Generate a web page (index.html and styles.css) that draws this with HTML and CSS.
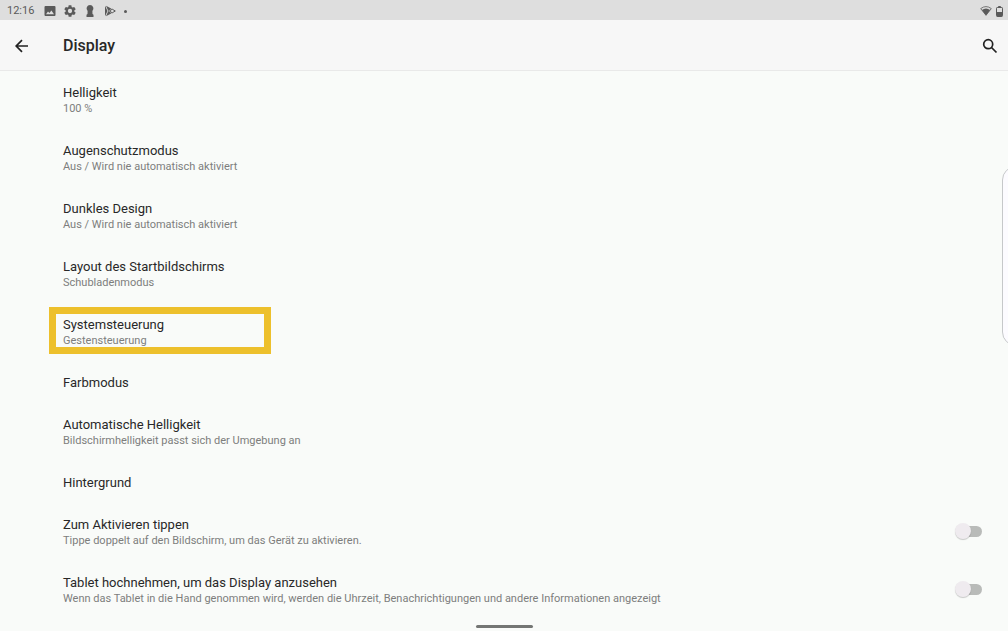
FILE: index.html
```html
<!DOCTYPE html>
<html lang="de">
<head>
<meta charset="utf-8">
<title>Display</title>
<link rel="stylesheet" href="styles.css">
</head>
<body>
<div class="status-bar">
  <div class="status-left">
    <span class="clock">12:16</span>
    <svg class="status-icon" viewBox="0 0 12 12"><path fill-rule="evenodd" d="M1.500 1h9a1 1 0 0 1 1 1v8a1 1 0 0 1-1 1h-9a1 1 0 0 1-1-1V2a1 1 0 0 1 1-1zM2 9.300h8L7.400 5.500 5.400 8.100 4 6.500z"/></svg>
    <svg class="status-icon" viewBox="2 2 20 20"><path d="M19.140 12.940a7 7 0 0 0 0-1.880l2.030-1.580a.5.5 0 0 0 .12-.61l-1.920-3.320a.5.5 0 0 0-.59-.22l-2.390.96a7 7 0 0 0-1.620-.94l-.36-2.540a.5.5 0 0 0-.48-.41h-3.840a.5.5 0 0 0-.47.410l-.36 2.540a7 7 0 0 0-1.620.94l-2.390-.96a.5.5 0 0 0-.59.220L2.740 8.870a.5.5 0 0 0 .12.610l2.030 1.580a7 7 0 0 0 0 1.880l-2.030 1.580a.5.5 0 0 0-.12.610l1.920 3.320c.12.220.37.290.59.220l2.390-.96a7 7 0 0 0 1.620.94l.36 2.540c.05.240.24.410.48.410h3.840c.24 0 .44-.17.470-.41l.36-2.540a7 7 0 0 0 1.620-.94l2.390.96c.22.080.47 0 .59-.22l1.920-3.320a.5.5 0 0 0-.12-.61zM12 15.600a3.600 3.600 0 1 1 0-7.200 3.600 3.600 0 0 1 0 7.200z"/></svg>
    <svg class="status-icon" viewBox="0 0 12 12"><path d="M6 0a3.500 3.500 0 0 1 2.400 6L8.500 9l1 .8V12h-7V9.800l1-.8.1-3A3.500 3.500 0 0 1 6 0z"/></svg>
    <svg class="status-icon" viewBox="0 0 12 12"><path d="M1 .8 3.500 6 1 11.200zM2 .8l5.600 3L4.300 6zM2 11.200l5.600-3L4.300 6z"/><path d="m8.200 4.200 3.100 1.800-3.100 1.800L5.500 6z" fill="none" stroke="#5a5a5a"/></svg>
    <span class="more-dot"></span>
  </div>
  <div class="status-right">
    <svg class="wifi" viewBox="0 0 12 10"><path d="M.7 2.600a8.800 8.800 0 0 1 10.600 0L6 9.300z" fill="none" stroke="#5a5a5a" stroke-width=".8"/><path d="M1.900 4.100a6.500 6.500 0 0 1 8.200 0L6 9.500z"/></svg>
    <svg class="battery" viewBox="0 0 7 11"><path d="M2.200 0h2.600v1.300H2.200z"/><rect x=".5" y="1.500" width="6" height="9" rx=".7" fill="none" stroke="#5a5a5a"/><path d="M1 6h5v4.500H1z"/></svg>
  </div>
</div>

<header class="app-bar">
  <button class="icon-button" type="button" aria-label="Zurück">
    <svg viewBox="0 0 16 16"><path d="M14 8H2.500M8 2.200 2.200 8 8 13.800"/></svg>
  </button>
  <h1 class="app-title">Display</h1>
  <button class="icon-button" type="button" aria-label="Suchen">
    <svg viewBox="0 0 16 16"><circle cx="6.200" cy="6.200" r="4.500"/><path d="m9.500 9.500 5 5"/></svg>
  </button>
</header>

<main class="settings">
  <div class="row"><div class="title">Helligkeit</div><div class="summary">100 %</div></div>
  <div class="row"><div class="title">Augenschutzmodus</div><div class="summary">Aus / Wird nie automatisch aktiviert</div></div>
  <div class="row"><div class="title">Dunkles Design</div><div class="summary">Aus / Wird nie automatisch aktiviert</div></div>
  <div class="row"><div class="title">Layout des Startbildschirms</div><div class="summary">Schubladenmodus</div></div>
  <div class="row highlighted"><div class="title">Systemsteuerung</div><div class="summary">Gestensteuerung</div></div>
  <div class="row"><div class="title">Farbmodus</div></div>
  <div class="row"><div class="title">Automatische Helligkeit</div><div class="summary">Bildschirmhelligkeit passt sich der Umgebung an</div></div>
  <div class="row"><div class="title">Hintergrund</div></div>
  <div class="row with-switch">
    <label for="tap-wake"><span class="title">Zum Aktivieren tippen</span><span class="summary">Tippe doppelt auf den Bildschirm, um das Gerät zu aktivieren.</span></label>
    <input class="switch" type="checkbox" role="switch" id="tap-wake">
  </div>
  <div class="row with-switch">
    <label for="lift-wake"><span class="title">Tablet hochnehmen, um das Display anzusehen</span><span class="summary">Wenn das Tablet in die Hand genommen wird, werden die Uhrzeit, Benachrichtigungen und andere Informationen angezeigt</span></label>
    <input class="switch" type="checkbox" role="switch" id="lift-wake">
  </div>
</main>

<div class="gesture-bar"></div>
<div class="edge-clip"><div class="edge-panel"></div></div>
</body>
</html>
```
FILE: styles.css
```css
*,
*::before,
*::after {
  box-sizing: border-box;
}

body {
  margin: 0;
  position: relative;
  min-height: 100vh;
  background: #f9fbf9;
  color: #282828;
  font-family: Roboto, "Noto Sans", sans-serif;
}

.status-bar {
  display: flex;
  justify-content: space-between;
  align-items: center;
  height: 20px;
  padding: 2px 5px 0 7px;
  background: #dedede;
  color: #5a5a5a;
}

.status-left {
  display: flex;
  align-items: center;
  gap: 8px;
}

.status-right {
  display: flex;
  align-items: center;
  gap: 4px;
}

.clock {
  margin-right: 2px;
  font-size: 11px;
  line-height: 16px;
}

.status-bar svg {
  fill: #5a5a5a;
}

.status-icon {
  width: 12px;
  height: 12px;
}

.more-dot {
  width: 3px;
  height: 3px;
  border-radius: 50%;
  background: #5a5a5a;
}

.wifi {
  width: 12px;
  height: 10px;
}

.battery {
  width: 7px;
  height: 11px;
}

.app-bar {
  display: flex;
  align-items: center;
  height: 51px;
  padding: 2px 10px 0 14px;
  background: #f7f7f7;
  border-bottom: 1px solid #e9e9e9;
}

.icon-button {
  display: flex;
  padding: 0;
  border: 0;
  background: none;
}

.icon-button svg {
  width: 16px;
  height: 16px;
  fill: none;
  stroke: #222;
  stroke-width: 1.7;
}

.app-title {
  flex: 1;
  margin: 0 0 0 33px;
  font-size: 16px;
  line-height: 24px;
  font-weight: 500;
}

.row {
  padding: 14px 26px 12px 63px;
}

.title {
  display: block;
  font-size: 13px;
  line-height: 16px;
}

.summary {
  display: block;
  color: #7d7e7d;
  font-size: 11px;
  line-height: 16px;
}

.with-switch {
  display: flex;
  align-items: flex-start;
  justify-content: space-between;
}

.highlighted {
  position: relative;
}

.highlighted::after {
  content: "";
  position: absolute;
  top: 4px;
  left: 49px;
  width: 222px;
  height: 47px;
  border: 7px solid #edc02c;
}

.switch {
  appearance: none;
  position: relative;
  flex: none;
  width: 26px;
  height: 11px;
  margin: 9px 0 0;
  border-radius: 6px;
  background: #b9bbb9;
}

.switch::before {
  content: "";
  position: absolute;
  top: -3px;
  left: -1px;
  width: 16px;
  height: 16px;
  border-radius: 50%;
  background: #efebef;
  box-shadow: 0 1px 1px #0003;
}

.switch:checked::before {
  left: 11px;
}

.gesture-bar {
  width: 57px;
  height: 3px;
  margin: 6px auto 0;
  border-radius: 2px;
  background: #747674;
}

.edge-clip {
  position: absolute;
  top: 166px;
  right: 0;
  width: 6px;
  height: 180px;
  overflow: hidden;
}

.edge-panel {
  width: 40px;
  height: 180px;
  border: 1px solid #c6c8ca;
  border-radius: 14px;
  background: #fcfbff;
}
```
